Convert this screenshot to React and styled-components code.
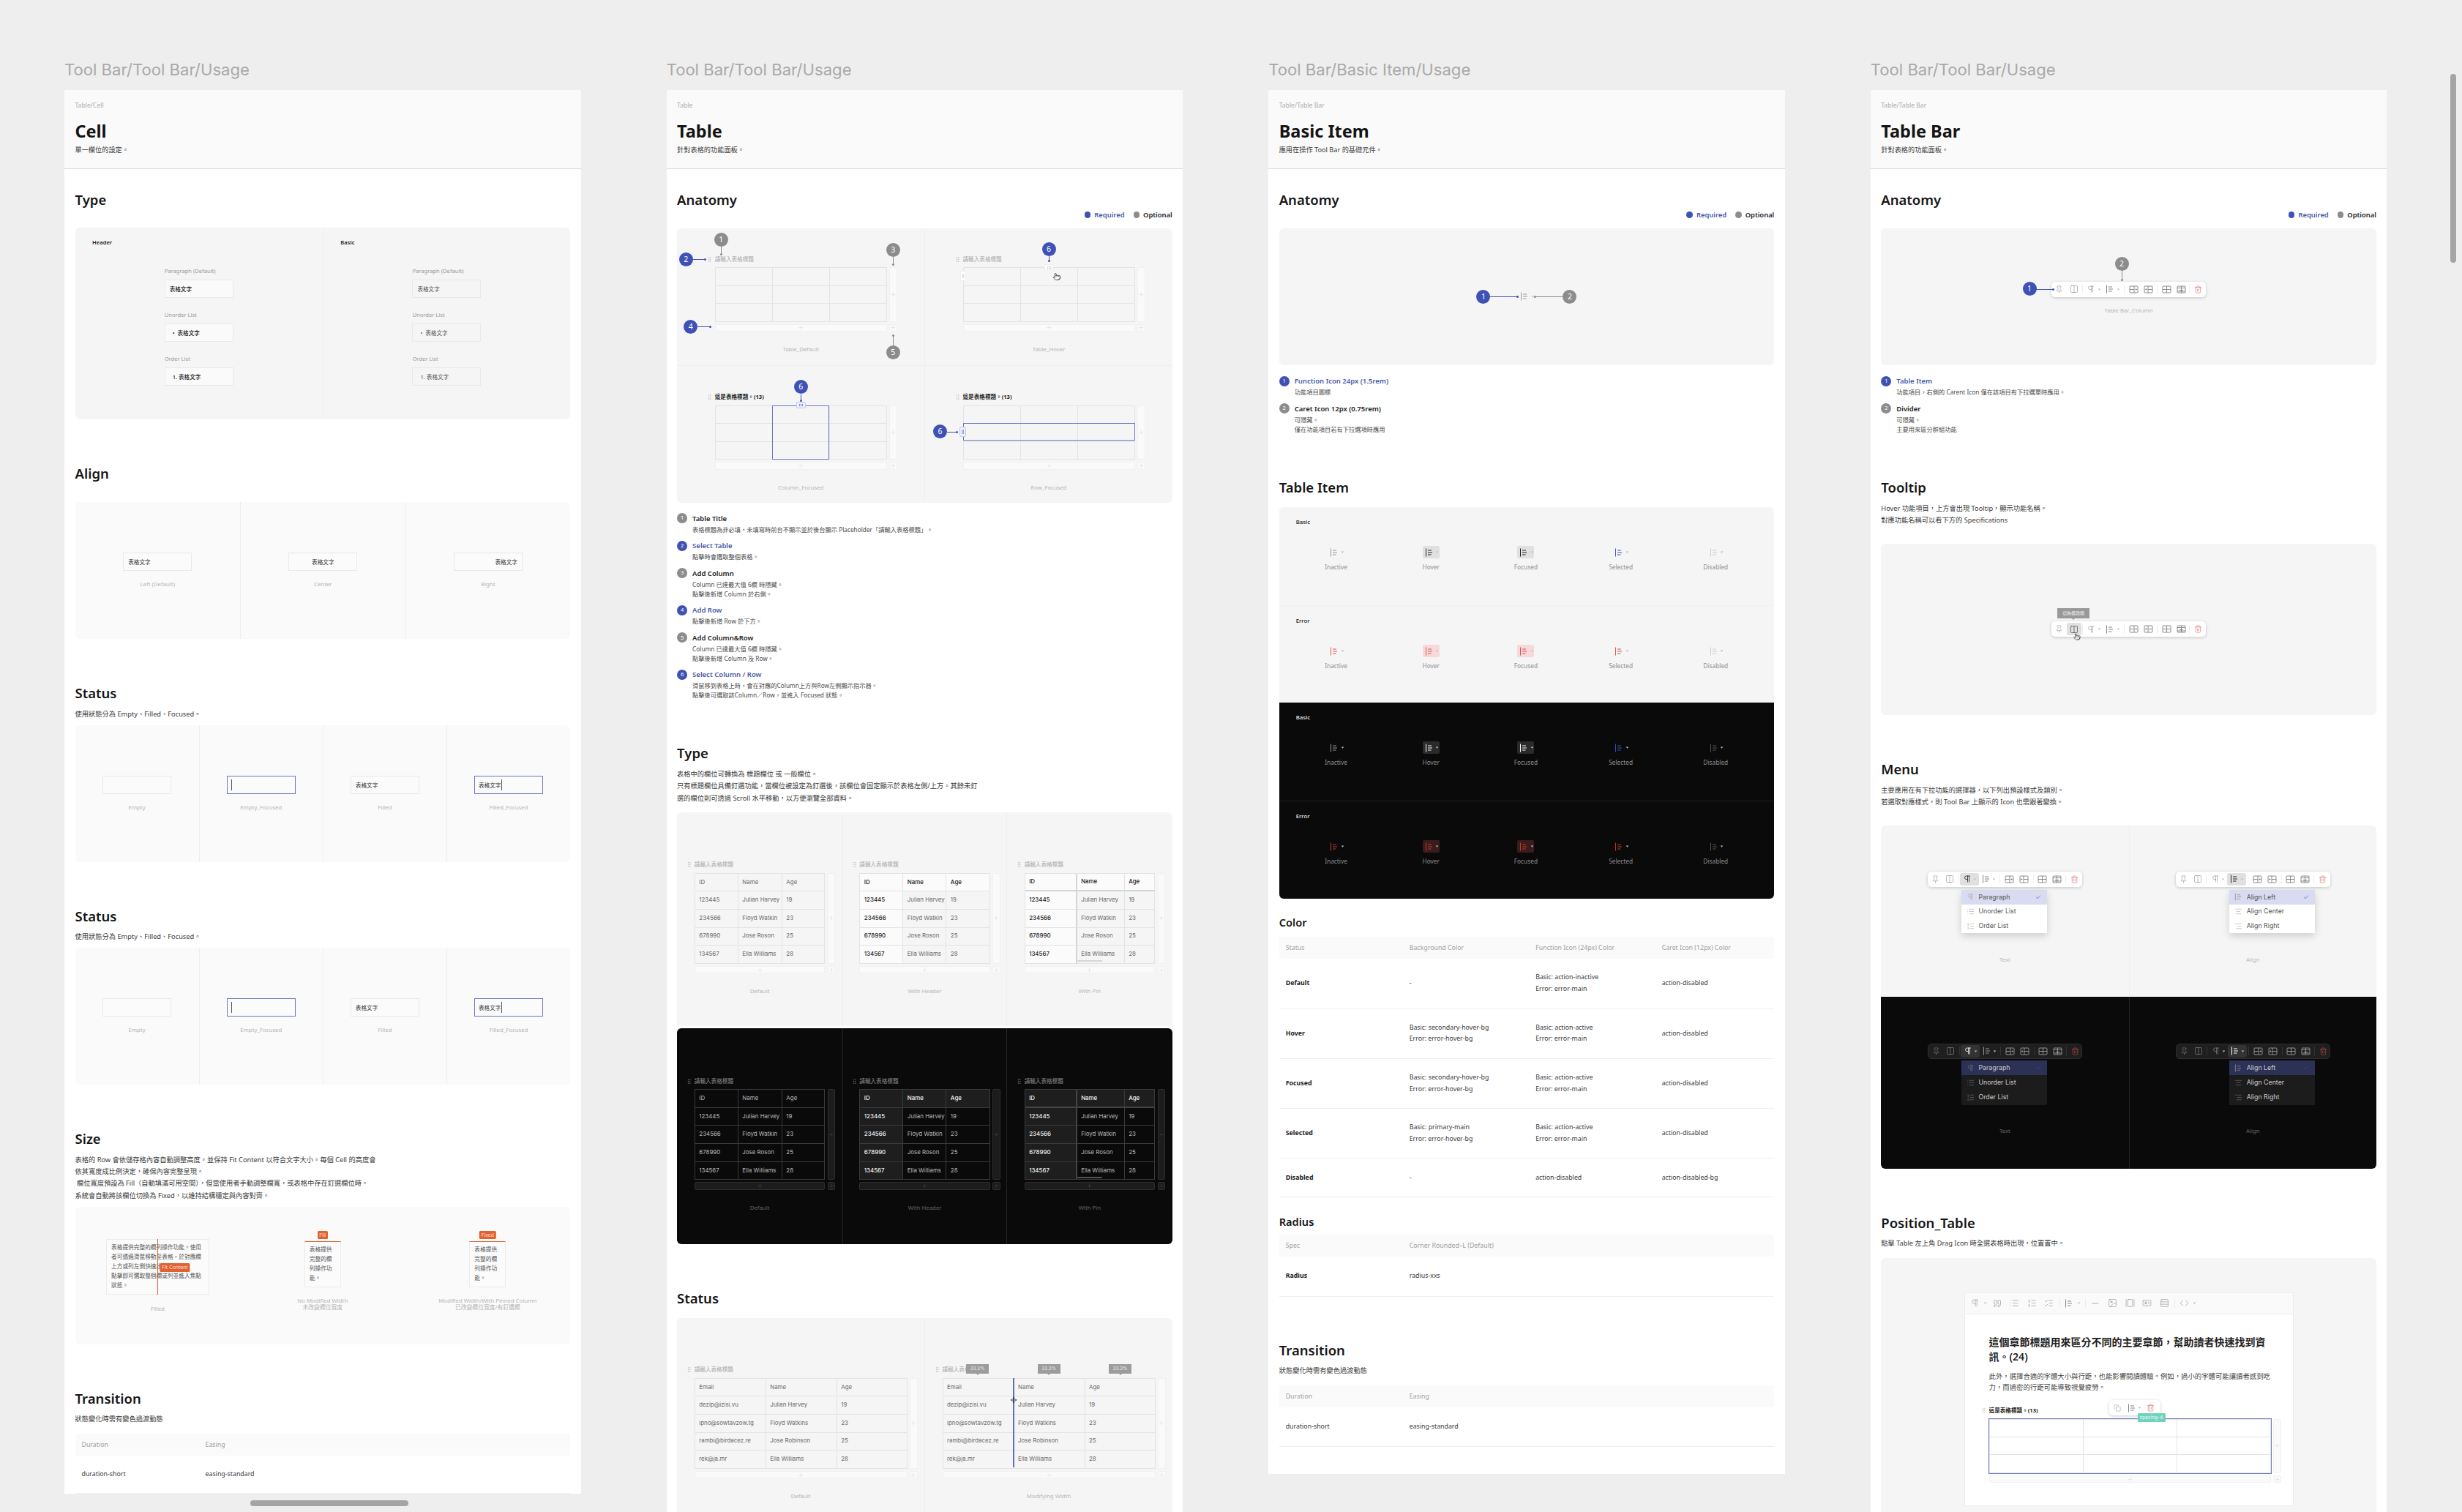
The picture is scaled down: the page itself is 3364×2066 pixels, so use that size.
import React from "react";
import styled, { createGlobalStyle } from "styled-components";
import {
  Pin,
  Columns2,
  Pilcrow,
  Trash2,
  Check,
  List,
  ListOrdered,
  ListChecks,
  AlignCenter,
  AlignRight,
  Plus,
  GripVertical,
  Pointer,
  Move,
  Quote,
  Minus,
  Image,
  GalleryHorizontal,
  IdCard,
  Rows3,
  Code,
  Copy,
} from "lucide-react";

const SANS = `"Noto Sans", "Noto Sans CJK TC", sans-serif`;
const UI = `Inter, "Noto Sans CJK TC", sans-serif`;
const BLUE = "#3f51b5";
const GREY = "#8c8c8c";
const ORANGE = "#e0632b";

const Global = createGlobalStyle`
  html, body {
    margin: 0;
    background: #eeeeee;
    font-family: ${SANS};
  }
  * { box-sizing: border-box; }
`;

const Board = styled.div`
  position: relative;
  display: flex;
  gap: 117px;
  width: 3364px;
  height: 2066px;
  padding-left: 88px;
  overflow: hidden;
  align-items: flex-start;
`;

const Column = styled.div`
  flex: none;
  width: 705.6px;
  padding-top: 80px;
`;

const FrameTitle = styled.div`
  height: 30px;
  margin-bottom: 13px;
  font: 400 22.1px/30px ${UI};
  color: #a9a9a9;
  white-space: nowrap;
`;

const Frame = styled.div`
  background: #fff;
`;

const FrameHead = styled.div`
  height: 108px;
  padding: 15px 14.5px 0;
  background: #fafafa;
  border-bottom: 1px solid #dcdcdc;
`;

const Crumb = styled.div`
  font-size: 8.6px;
  line-height: 12px;
  color: #aaa;
`;

const PageName = styled.h1`
  margin: 13px 0 0;
  font-size: 23.5px;
  line-height: 32px;
  font-weight: 700;
  color: #141414;
`;

const PageNote = styled.div`
  margin-top: 3px;
  font-size: 9.2px;
  line-height: 14px;
  color: #3a3a3a;
`;

const FrameBody = styled.div`
  padding: 0 14.5px ${(p) => p.$pb || 0}px;
`;

const H2 = styled.h2`
  margin: ${(p) => (p.$mt === undefined ? 61 : p.$mt)}px 0 0;
  font-size: 18.5px;
  line-height: 26px;
  font-weight: 600;
  color: #161616;
`;

const H3 = styled.h3`
  margin: ${(p) => p.$mt}px 0 0;
  font-size: 14.6px;
  line-height: 20px;
  font-weight: 600;
  color: #161616;
`;

const Para = styled.p`
  margin: ${(p) => (p.$mt === undefined ? 7.6 : p.$mt)}px 0 0;
  font-size: 9.25px;
  line-height: 16.4px;
  color: #3a3a3a;
  white-space: pre;
`;

const tones = {
  base: { bg: "#f5f5f5", line: "#eeeeee" },
  soft: { bg: "#fafafa", line: "#ededed" },
  dark: { bg: "#0a0a0a", line: "#242424" },
};

const Box = styled.div`
  display: grid;
  grid-template-columns: ${(p) => p.$cols || "1fr"};
  grid-template-rows: ${(p) => p.$rows || "1fr"};
  height: ${(p) => p.$h}px;
  margin-top: ${(p) => (p.$mt === undefined ? 6.5 : p.$mt)}px;
  background: ${(p) => tones[p.$tone || "base"].bg};
  border-radius: ${(p) => p.$radius || "6px"};
  overflow: hidden;
`;

const Pane = styled.div`
  position: relative;
  display: flex;
  flex-direction: column;
  align-items: ${(p) => p.$align || "center"};
  justify-content: ${(p) => p.$justify || "flex-start"};
  padding-top: ${(p) => p.$pt || 0}px;
  border-left: ${(p) => (p.$first ? "0" : `1px solid ${tones[p.$tone || "base"].line}`)};
  border-top: ${(p) => (p.$under ? `1px solid ${tones[p.$tone || "base"].line}` : "0")};
`;

const Caption = styled.div`
  margin-top: ${(p) => p.$mt || 18}px;
  font: 400 7.8px/${(p) => p.$lh || 12}px ${SANS};
  color: ${(p) => (p.$dark ? "#666" : "#b5b5b5")};
  text-align: center;
  white-space: nowrap;
`;

/* legend and numbered list */
const Legend = styled.div`
  display: flex;
  justify-content: flex-end;
  align-items: center;
  gap: 12px;
  height: 14px;
  margin-top: 0.5px;
`;

const LegendItem = styled.span`
  display: inline-flex;
  align-items: center;
  gap: 5px;
  font-size: 9.4px;
  font-weight: 600;
  color: ${(p) => p.$color};
  &::before {
    content: "";
    width: 8.5px;
    height: 8.5px;
    border-radius: 50%;
    background: ${(p) => p.$dot};
  }
`;

const Badge = styled.span`
  display: inline-flex;
  flex: none;
  align-items: center;
  justify-content: center;
  width: ${(p) => p.$size || 19}px;
  height: ${(p) => p.$size || 19}px;
  border-radius: 50%;
  background: ${(p) => p.$color};
  color: #fff;
  font: 400 ${(p) => (p.$size === 14 ? 7.5 : 10.5)}px/1 ${SANS};
`;

const Notes = styled.div`
  display: flex;
  flex-direction: column;
  gap: 8.6px;
  margin-top: 14px;
`;

const NoteHead = styled.div`
  display: flex;
  align-items: center;
  gap: 7px;
  height: 15px;
  font-size: 9.5px;
  font-weight: 600;
  color: ${(p) => (p.$req ? "#4a5aa8" : "#222")};
`;

const NoteText = styled.div`
  margin: 1px 0 0 21px;
  font-size: 8.25px;
  line-height: 13px;
  color: #4a4a4a;
  white-space: pre;
`;

function NoteList({ items }) {
  return (
    <Notes>
      {items.map((n, i) => (
        <div key={n.title}>
          <NoteHead $req={n.req}>
            <Badge $size={14} $color={n.req ? BLUE : GREY}>
              {i + 1}
            </Badge>
            {n.title}
          </NoteHead>
          <NoteText>{n.text}</NoteText>
        </div>
      ))}
    </Notes>
  );
}

const LegendRow = () => (
  <Legend>
    <LegendItem $dot={BLUE} $color="#4a5aa8">Required</LegendItem>
    <LegendItem $dot={GREY} $color="#222">Optional</LegendItem>
  </Legend>
);

/* callouts that lie over a diagram */
const PinBadge = styled(Badge)`
  position: absolute;
  left: ${(p) => p.$x - 9.5}px;
  top: ${(p) => p.$y - 9.5}px;
  z-index: 3;
`;

const Lead = styled.span`
  position: absolute;
  left: ${(p) => p.$x}px;
  top: ${(p) => p.$y}px;
  width: ${(p) => p.$w || 1}px;
  height: ${(p) => p.$h || 1}px;
  background: ${(p) => p.$color};
  z-index: 2;
  &::after {
    content: "";
    position: absolute;
    width: 3px;
    height: 3px;
    border-radius: 50%;
    background: ${(p) => p.$color};
    ${(p) => (p.$w ? "right: -1px; top: -1px;" : p.$dotTop ? "left: -1px; top: -1px;" : "left: -1px; bottom: -1px;")}
  }
`;

const Handle = styled.span`
  position: absolute;
  left: ${(p) => p.$x - p.$w / 2}px;
  top: ${(p) => p.$y - p.$h / 2}px;
  display: flex;
  align-items: center;
  justify-content: center;
  width: ${(p) => p.$w}px;
  height: ${(p) => p.$h}px;
  background: ${(p) => (p.$on ? "#eef0fa" : "#fff")};
  border: 1px solid ${(p) => (p.$on ? "#c5cae9" : "#eee")};
  border-radius: 2px;
  color: ${(p) => (p.$on ? BLUE : "#aaa")};
  z-index: 2;
`;

const SideGrip = styled(GripVertical)`
  transform: rotate(90deg);
`;

const Focus = styled.span`
  position: absolute;
  left: ${(p) => p.$x}px;
  top: ${(p) => p.$y}px;
  width: ${(p) => p.$w}px;
  height: ${(p) => p.$h}px;
  border: 1px solid #6b78c4;
`;

const Cursor = styled.span`
  position: absolute;
  left: ${(p) => p.$x}px;
  top: ${(p) => p.$y}px;
  display: flex;
  transform: translate(-50%, -50%);
  color: #222;
  z-index: 4;
`;

const PercentTip = styled.span`
  position: absolute;
  left: ${(p) => p.$x - 15.5}px;
  top: -1px;
  width: 31px;
  height: 13px;
  background: #9c9c9c;
  color: #eee;
  font: 400 6.6px/13px ${UI};
  text-align: center;
  z-index: 3;
  &::after {
    content: "";
    position: absolute;
    left: 13.5px;
    bottom: -2px;
    border: 2px solid transparent;
    border-bottom: 0;
    border-top-color: #9c9c9c;
  }
`;

const DragLine = styled.span`
  position: absolute;
  left: ${(p) => p.$x}px;
  top: 18px;
  width: 1.5px;
  height: 122px;
  background: #5f6fbb;
  z-index: 2;
`;

/* table frame: grip, title, table, add column and add row */
const Shell = styled.div`
  position: relative;
  display: grid;
  grid-template-columns: 14px ${(p) => p.$w}px 14px;
  margin-left: ${(p) => p.$ml || 0}px;
`;

const GripCell = styled.span`
  display: flex;
  align-items: center;
  justify-content: center;
  height: 13px;
  margin-bottom: 4.5px;
  color: ${(p) => (p.$dark ? "#777" : "#bbb")};
`;

const ShellTitle = styled.div`
  grid-column: 2 / 4;
  height: 13px;
  font-size: 7.6px;
  line-height: 13px;
  font-weight: ${(p) => (p.$bold ? 700 : 400)};
  color: ${(p) => (p.$dark ? "#8a8a8a" : p.$bold ? "#222" : "#aaa")};
  white-space: nowrap;
`;

const AddSide = styled.div`
  display: flex;
  align-items: center;
  justify-content: center;
  margin-left: 3.5px;
  background: ${(p) => (p.$dark ? "#1c1c1c" : "#fafafa")};
  border: 1px solid ${(p) => (p.$dark ? "#2e2e2e" : "#f1f1f1")};
  border-radius: 2px;
  color: ${(p) => (p.$dark ? "#555" : "#c8c8c8")};
`;

const AddBottom = styled(AddSide)`
  height: 10.5px;
  margin: 3px 0 0;
`;

const AddCorner = styled(AddSide)`
  height: 10.5px;
  margin: 3px 0 0 3.5px;
`;

const Spacer = styled.span``;

const TableGrid = styled.div`
  display: grid;
  grid-template-columns: ${(p) => p.$cols};
  grid-auto-rows: ${(p) => p.$row}px;
  border-top: 1px solid ${(p) => (p.$dark ? "#3a3a3a" : "#e3e3e3")};
  border-left: 1px solid ${(p) => (p.$dark ? "#3a3a3a" : "#e3e3e3")};
  background: ${(p) => p.$fill || "transparent"};
  outline: ${(p) => (p.$focus ? "1px solid #6b78c4" : "none")};
`;

const BlankCell = styled.div`
  border-right: 1px solid #e3e3e3;
  border-bottom: 1px solid #e3e3e3;
`;

const DataCell = styled.div`
  display: flex;
  align-items: center;
  padding-left: 5.5px;
  font: ${(p) => (p.$strong ? 500 : 400)} 7.9px/1 ${UI};
  white-space: nowrap;
  overflow: hidden;
  color: ${(p) =>
    p.$dark ? (p.$strong ? "#f0f0f0" : "#b8b8b8") : p.$strong ? "#222" : "#6a6a6a"};
  background: ${(p) =>
    p.$strong ? (p.$dark ? "#1e1e1e" : "#fbfbfb") : "transparent"};
  border-right: ${(p) => (p.$pin ? 2 : 1)}px solid
    ${(p) => (p.$dark ? (p.$pin ? "#444" : "#3a3a3a") : p.$pin ? "#d5d5d5" : "#e3e3e3")};
  border-bottom: ${(p) => (p.$pinRow ? 2 : 1)}px solid
    ${(p) => (p.$dark ? (p.$pinRow ? "#444" : "#3a3a3a") : p.$pinRow ? "#d5d5d5" : "#e3e3e3")};
`;

const ScrollHint = styled.span`
  position: absolute;
  left: ${(p) => p.$x}px;
  top: ${(p) => p.$y}px;
  width: 34px;
  height: 2px;
  border-radius: 1px;
  background: ${(p) => (p.$dark ? "#555" : "#d5d5d5")};
`;

function TableShell({ w, title, bold, dark, ml, children, over }) {
  return (
    <Shell $w={w} $ml={ml}>
      <GripCell $dark={dark}>
        <GripVertical size={9} strokeWidth={1.5} />
      </GripCell>
      <ShellTitle $bold={bold} $dark={dark}>
        {title}
      </ShellTitle>
      <Spacer />
      {children}
      <AddSide $dark={dark}>
        <Plus size={9} strokeWidth={1} />
      </AddSide>
      <Spacer />
      <AddBottom $dark={dark}>
        <Plus size={9} strokeWidth={1} />
      </AddBottom>
      <AddCorner $dark={dark}>
        <Plus size={9} strokeWidth={1} />
      </AddCorner>
      {over}
    </Shell>
  );
}

const TITLE = "請輸入表格標題";
const TITLE_FULL = "這是表格標題。(13)";

function BlankTable({ cols, row, fill, focus }) {
  return (
    <TableGrid $cols={cols} $row={row} $fill={fill} $focus={focus}>
      {Array.from({ length: 9 }, (_, i) => (
        <BlankCell key={i} />
      ))}
    </TableGrid>
  );
}

const AGES = [
  ["ID", "Name", "Age"],
  ["123445", "Julian Harvey", "19"],
  ["234566", "Floyd Watkin", "23"],
  ["678990", "Jose Roson", "25"],
  ["134567", "Ella Williams", "28"],
];

const MAILS = [
  ["Email", "Name", "Age"],
  ["dezip@izisi.vu", "Julian Harvey", "19"],
  ["ipno@sowtavzow.tg", "Floyd Watkins", "23"],
  ["rambi@birdacez.re", "Jose Robinson", "25"],
  ["rek@ja.mr", "Ella Williams", "28"],
];

function DataTable({ rows, cols, dark, variant }) {
  return (
    <TableGrid $cols={cols} $row={24.6} $dark={dark}>
      {rows.flatMap((r, ri) =>
        r.map((v, ci) => (
          <DataCell
            key={`${ri}-${ci}`}
            $dark={dark}
            $strong={variant && (ri === 0 || ci === 0)}
            $pin={variant === "pin" && ci === 0}
            $pinRow={variant === "pin" && ri === 0}
          >
            {v}
          </DataCell>
        ))
      )}
    </TableGrid>
  );
}

function TypeRow({ dark }) {
  const list = [
    { cap: "Default", cols: "59px 60px 1fr" },
    { cap: "With Header", cols: "59px 59px 1fr", variant: "header" },
    { cap: "With Pin", cols: "71px 65px 1fr", variant: "pin" },
  ];
  return list.map((t, i) => (
    <Pane key={t.cap} $first={i === 0} $tone={dark ? "dark" : "base"} $pt={dark ? 66 : 65}>
      <TableShell
        w={178.5}
        title={TITLE}
        dark={dark}
        over={t.variant === "pin" ? <ScrollHint $x={86} $y={137} $dark={dark} /> : null}
      >
        <DataTable rows={AGES} cols={t.cols} dark={dark} variant={t.variant} />
      </TableShell>
      <Caption $dark={dark}>{t.cap}</Caption>
    </Pane>
  ));
}

/* anatomy of the table */
const anatomyCols = "78px 78px 1fr";

function AnatomyTable() {
  const line = (c) => ({ $color: c });
  return (
    <Box $cols="1fr 1fr" $rows="1fr 1fr" $h={375} $mt={11}>
      <Pane $first $pt={36}>
        <TableShell
          w={235}
          title={TITLE}
          over={
            <>
              <PinBadge $x={22.5} $y={-20.5} $color={GREY}>1</PinBadge>
              <Lead $x={22.5} $y={-11} $h={11} {...line(GREY)} />
              <PinBadge $x={-25.5} $y={6.5} $color={BLUE}>2</PinBadge>
              <Lead $x={-16.5} $y={6.5} $w={18} {...line(BLUE)} />
              <PinBadge $x={257.5} $y={-6.5} $color={GREY}>3</PinBadge>
              <Lead $x={257.5} $y={3} $h={11} {...line(GREY)} />
              <PinBadge $x={-19} $y={98.5} $color={BLUE}>4</PinBadge>
              <Lead $x={-9.5} $y={98.5} $w={18} {...line(BLUE)} />
              <PinBadge $x={257.5} $y={133.5} $color={GREY}>5</PinBadge>
              <Lead $x={257.5} $y={110.5} $h={14} $dotTop {...line(GREY)} />
            </>
          }
        >
          <BlankTable cols={anatomyCols} row={24.5} />
        </TableShell>
        <Caption>Table_Default</Caption>
      </Pane>
      <Pane $pt={36}>
        <TableShell
          w={235}
          title={TITLE}
          over={
            <>
              <PinBadge $x={131.5} $y={-7.5} $color={BLUE}>6</PinBadge>
              <Lead $x={131.5} $y={2.5} $h={7} {...line(BLUE)} />
              <Handle $x={131.5} $y={17.5} $w={12} $h={8}>
                <SideGrip size={7} strokeWidth={1.5} />
              </Handle>
              <Handle $x={14} $y={29.5} $w={8} $h={14}>
                <GripVertical size={8} strokeWidth={1.5} />
              </Handle>
              <Cursor $x={142.5} $y={30}>
                <Pointer size={11} strokeWidth={1.5} />
              </Cursor>
            </>
          }
        >
          <BlankTable cols={anatomyCols} row={24.5} />
        </TableShell>
        <Caption>Table_Hover</Caption>
      </Pane>
      <Pane $first $under $pt={36}>
        <TableShell
          w={235}
          title={TITLE_FULL}
          bold
          over={
            <>
              <PinBadge $x={131.5} $y={-7.5} $color={BLUE}>6</PinBadge>
              <Lead $x={131.5} $y={2.5} $h={9} {...line(BLUE)} />
              <Focus $x={92.5} $y={17.5} $w={78} $h={74} />
              <Handle $x={131.5} $y={17.5} $w={13} $h={9} $on>
                <SideGrip size={7} strokeWidth={1.5} />
              </Handle>
            </>
          }
        >
          <BlankTable cols={anatomyCols} row={24.5} />
        </TableShell>
        <Caption>Column_Focused</Caption>
      </Pane>
      <Pane $under $pt={36}>
        <TableShell
          w={235}
          title={TITLE_FULL}
          bold
          over={
            <>
              <PinBadge $x={-17} $y={53.5} $color={BLUE}>6</PinBadge>
              <Lead $x={-8} $y={53.5} $w={14} {...line(BLUE)} />
              <Focus $x={14} $y={42} $w={235} $h={24} />
              <Handle $x={14} $y={53.5} $w={9} $h={14} $on>
                <GripVertical size={8} strokeWidth={1.5} />
              </Handle>
            </>
          }
        >
          <BlankTable cols={anatomyCols} row={24.5} />
        </TableShell>
        <Caption>Row_Focused</Caption>
      </Pane>
    </Box>
  );
}

/* cells */
const CellLabel = styled.div`
  margin-top: ${(p) => p.$mt || 0}px;
  margin-bottom: 6px;
  font-size: 7.6px;
  line-height: 12px;
  color: #999;
  width: 94px;
`;

const Corner = styled.div`
  align-self: flex-start;
  margin: 14px 0 27px 23.5px;
  font-size: 7.6px;
  line-height: 12px;
  font-weight: 600;
  color: #222;
`;

const Cell = styled.div`
  display: flex;
  align-items: center;
  justify-content: ${(p) => p.$justify || "flex-start"};
  width: 94px;
  height: 25px;
  padding: 0 ${(p) => (p.$focus ? 5 : 6)}px 0 ${(p) => (p.$focus ? 5 : 6) + (p.$indent || 0)}px;
  background: ${(p) => p.$bg || "#fbfbfb"};
  border: ${(p) => (p.$focus ? "1px solid #6b78c4" : "1px solid #e9e9e9")};
  font-size: 7.6px;
  font-weight: ${(p) => p.$weight || 400};
  color: ${(p) => p.$color || "#333"};
  white-space: pre;
`;

const Caret = styled.span`
  width: 1px;
  height: 15px;
  margin-left: ${(p) => p.$ml || 0}px;
  background: #555;
`;

const Stack = styled.div`
  display: flex;
  flex-direction: column;
  align-items: center;
`;

function TypeColumn({ name, first, bg, color, weight }) {
  const rows = [
    { label: "Paragraph (Default)", text: "表格文字", indent: 0 },
    { label: "Unorder List", text: "•  表格文字", indent: 4 },
    { label: "Order List", text: "1. 表格文字", indent: 4 },
  ];
  return (
    <Pane $first={first}>
      <Corner>{name}</Corner>
      {rows.map((r, i) => (
        <Stack key={r.label}>
          <CellLabel $mt={i ? 17 : 0}>{r.label}</CellLabel>
          <Cell $bg={bg} $color={color} $weight={weight} $indent={r.indent}>
            {r.text}
          </Cell>
        </Stack>
      ))}
    </Pane>
  );
}

function StatusBox({ mt }) {
  const list = [
    { cap: "Empty" },
    { cap: "Empty_Focused", focus: true, caret: true },
    { cap: "Filled", text: "表格文字" },
    { cap: "Filled_Focused", text: "表格文字", focus: true, caret: true },
  ];
  return (
    <Box $cols="repeat(4, 1fr)" $h={187} $tone="soft" $mt={mt}>
      {list.map((s, i) => (
        <Pane key={s.cap} $first={i === 0} $tone="soft" $justify="center">
          <Cell $focus={s.focus}>
            {s.text}
            {s.caret && <Caret $ml={s.text ? 1 : 0} />}
          </Cell>
          <Caption $mt={12}>{s.cap}</Caption>
        </Pane>
      ))}
    </Box>
  );
}

/* size demo */
const SizeCell = styled.div`
  position: relative;
  width: ${(p) => p.$w}px;
  padding: ${(p) => p.$pad};
  background: #fbfbfb;
  border: 1px solid #ececec;
  border-top: ${(p) => (p.$marked ? `1px solid ${ORANGE}` : "1px solid #ececec")};
  font-size: 7.7px;
  line-height: ${(p) => p.$lh}px;
  color: #555;
`;

const SizeMark = styled.span`
  position: absolute;
  left: 50%;
  top: -1px;
  bottom: -1px;
  width: 1px;
  background: ${ORANGE};
`;

const OrangeTag = styled.span`
  position: absolute;
  left: ${(p) => p.$left || "50%"};
  top: ${(p) => p.$top}px;
  transform: translateX(-50%);
  padding: 0 ${(p) => p.$px || 2.5}px;
  height: ${(p) => p.$h || 11}px;
  border-radius: 1.5px;
  background: ${ORANGE};
  color: #fde;
  font: 400 6.8px/${(p) => p.$h || 11}px ${UI};
  white-space: nowrap;
`;

/* spec tables */
const SpecHead = styled.div`
  display: grid;
  grid-template-columns: ${(p) => p.$cols};
  align-items: center;
  height: ${(p) => p.$h || 30}px;
  margin-top: ${(p) => p.$mt}px;
  padding-left: 9px;
  background: #fafafa;
  border-radius: 3px;
  font-size: 8.8px;
  color: #a0a0a0;
  white-space: nowrap;
`;

const SpecRow = styled.div`
  display: grid;
  grid-template-columns: ${(p) => p.$cols};
  align-items: center;
  height: ${(p) => p.$h}px;
  padding-left: 9px;
  border-bottom: 1px solid #efefef;
  font-size: 8.8px;
  line-height: 15.3px;
  color: #3a3a3a;
  white-space: pre;
`;

const SpecName = styled.span`
  font-weight: ${(p) => (p.$bold ? 700 : 400)};
  color: ${(p) => (p.$bold ? "#222" : "#3a3a3a")};
`;

const COLOR_COLS = "169px 172.5px 172.5px 1fr";
const PAIR_COLS = "169px 1fr";

const COLOR_ROWS = [
  { h: 69, cells: ["Default", "-", "Basic: action-inactive\nError: error-main", "action-disabled"] },
  { h: 68.6, cells: ["Hover", "Basic: secondary-hover-bg\nError: error-hover-bg", "Basic: action-active\nError: error-main", "action-disabled"] },
  { h: 68, cells: ["Focused", "Basic: secondary-hover-bg\nError: error-hover-bg", "Basic: action-active\nError: error-main", "action-disabled"] },
  { h: 68, cells: ["Selected", "Basic: primary-main\nError: error-hover-bg", "Basic: action-active\nError: error-main", "action-disabled"] },
  { h: 53, cells: ["Disabled", "-", "action-disabled", "action-disabled-bg"] },
];

/* icons */
const AlignGlyph = ({ size = 12 }) => (
  <svg width={size} height={size} viewBox="0 0 12 12" fill="none" stroke="currentColor" strokeWidth="1">
    <path d="M1.5 .5v11M4 3h5M4 6h6M4 9h4.5" />
  </svg>
);

const CaretGlyph = () => (
  <svg width="5" height="5" viewBox="0 0 6 6" fill="currentColor">
    <path d="M.8 1.8h4.4L3 4.6z" />
  </svg>
);

const GridGlyph = ({ d }) => (
  <svg width="13" height="13" viewBox="0 0 13 13" fill="none" stroke="currentColor" strokeWidth="0.9">
    <rect x="1" y="2" width="11" height="9" rx="1" />
    <path d={d} />
  </svg>
);

const GRID_A = "M1 6.5h6M7 2v9M8.5 6.5h2.4M9.7 5.3v2.4";
const GRID_B = "M12 6.5H6M6 2v9M4.5 6.5H2.1M3.3 5.3v2.4";
const GRID_C = "M1 6.5h11M6.5 2v9";
const GRID_D = "M1 4.5h11M6.5 2v9M4 7.5h5M1 9h11";

/* table bar */
const Bar = styled.div`
  position: relative;
  display: flex;
  align-items: center;
  width: 211px;
  height: 21px;
  padding-left: 0.5px;
  background: ${(p) => (p.$dark ? "#1f1f1f" : "#fff")};
  border-radius: 5px;
  border: ${(p) => (p.$dark ? "1px solid #2e2e2e" : "0")};
  box-shadow: ${(p) => (p.$dark ? "none" : "0 1px 4px rgba(0, 0, 0, 0.2)")};
`;

const Tool = styled.span`
  display: flex;
  flex: none;
  align-items: center;
  justify-content: ${(p) => (p.$caret ? "flex-start" : "center")};
  gap: 2.5px;
  width: ${(p) => (p.$caret ? 26 : 20)}px;
  height: 17px;
  padding-left: ${(p) => (p.$caret ? 4 : 0)}px;
  border-radius: 3px;
  background: ${(p) => (p.$on ? (p.$dark ? "#333" : "#e0e0e0") : "transparent")};
  color: ${(p) =>
    p.$danger
      ? "#d9534f"
      : p.$on
      ? p.$dark
        ? "#fff"
        : "#222"
      : p.$dark
      ? "#9a9a9a"
      : "#808080"};
`;

const ToolCaret = styled.span`
  display: flex;
  color: #bdbdbd;
`;

const ToolGap = styled.span`
  flex: none;
  width: ${(p) => p.$w}px;
  display: flex;
  justify-content: center;
  &::after {
    content: "";
    width: 1px;
    height: 12px;
    background: ${(p) => (p.$dark ? "#333" : "#eee")};
  }
`;

function TableBar({ dark, on, children }) {
  return (
    <Bar $dark={dark}>
      <Tool $dark={dark}><Pin size={11} strokeWidth={1.1} /></Tool>
      <Tool $dark={dark} $on={on === "panel"}><Columns2 size={12} strokeWidth={1.1} /></Tool>
      <ToolGap $w={3.5} $dark={dark} />
      <Tool $dark={dark} $caret $on={on === "text"}>
        <Pilcrow size={12} strokeWidth={on === "text" ? 1.6 : 1.1} />
        <ToolCaret><CaretGlyph /></ToolCaret>
      </Tool>
      <Tool $dark={dark} $caret $on={on === "align"}>
        <AlignGlyph />
        <ToolCaret><CaretGlyph /></ToolCaret>
      </Tool>
      <ToolGap $w={6} $dark={dark} />
      <Tool $dark={dark}><GridGlyph d={GRID_A} /></Tool>
      <Tool $dark={dark}><GridGlyph d={GRID_B} /></Tool>
      <ToolGap $w={5} $dark={dark} />
      <Tool $dark={dark}><GridGlyph d={GRID_C} /></Tool>
      <Tool $dark={dark}><GridGlyph d={GRID_D} /></Tool>
      <ToolGap $w={3.5} $dark={dark} />
      <Tool $danger><Trash2 size={11} strokeWidth={1.2} /></Tool>
      {children}
    </Bar>
  );
}

const NameTip = styled.span`
  position: absolute;
  left: 8px;
  top: -18.5px;
  width: 44px;
  height: 14px;
  background: #999;
  color: #eee;
  font-size: 6px;
  line-height: 14px;
  text-align: center;
  &::after {
    content: "";
    position: absolute;
    left: 20px;
    bottom: -2px;
    border: 2px solid transparent;
    border-bottom: 0;
    border-top-color: #999;
  }
`;

/* drop menus */
const MenuBox = styled.div`
  align-self: flex-start;
  width: 117px;
  margin: ${(p) => (p.$dark ? 2.5 : 4.5)}px 0 0 ${(p) => p.$ml}px;
  background: ${(p) => (p.$dark ? "#1c1c1c" : "#fff")};
  box-shadow: ${(p) => (p.$dark ? "none" : "0 4px 10px rgba(0, 0, 0, 0.16)")};
`;

const MenuRow = styled.div`
  display: flex;
  align-items: center;
  height: ${(p) => (p.$dark ? 20.2 : 19.6)}px;
  padding: 0 8px 0 7px;
  gap: 5.5px;
  background: ${(p) => (p.$on ? (p.$dark ? "#2c3156" : "#d9dbf0") : "transparent")};
  font: 400 8.8px/1 ${UI};
  color: ${(p) => (p.$dark ? "#ccc" : "#555")};
`;

const MenuIcon = styled.span`
  display: flex;
  color: ${(p) => (p.$dark ? "#888" : "#999")};
`;

const MenuCheck = styled.span`
  display: flex;
  margin-left: auto;
  color: ${BLUE};
`;

function DropMenu({ dark, ml, items }) {
  return (
    <MenuBox $dark={dark} $ml={ml}>
      {items.map(([label, Icon], i) => (
        <MenuRow key={label} $dark={dark} $on={i === 0}>
          <MenuIcon $dark={dark}><Icon size={11} strokeWidth={1.1} /></MenuIcon>
          {label}
          {i === 0 && <MenuCheck><Check size={8} strokeWidth={2} /></MenuCheck>}
        </MenuRow>
      ))}
    </MenuBox>
  );
}

const TEXT_ITEMS = [["Paragraph", Pilcrow], ["Unorder List", List], ["Order List", ListOrdered]];
const ALIGN_ITEMS = [["Align Left", AlignGlyph], ["Align Center", AlignCenter], ["Align Right", AlignRight]];

function MenuRowPanes({ dark }) {
  const tone = dark ? "dark" : "base";
  return (
    <>
      <Pane $first $tone={tone} $pt={dark ? 64 : 62.5}>
        <Stack>
          <TableBar dark={dark} on="text" />
          <DropMenu dark={dark} ml={46} items={TEXT_ITEMS} />
          <Caption $mt={dark ? 29.5 : 30} $dark={dark}>Text</Caption>
        </Stack>
      </Pane>
      <Pane $tone={tone} $pt={dark ? 64 : 62.5}>
        <Stack>
          <TableBar dark={dark} on="align" />
          <DropMenu dark={dark} ml={73.5} items={ALIGN_ITEMS} />
          <Caption $mt={dark ? 29.5 : 30} $dark={dark}>Align</Caption>
        </Stack>
      </Pane>
    </>
  );
}

/* basic item */
const FlowLine = styled.span`
  position: relative;
  width: 38px;
  height: 1px;
  background: ${(p) => p.$color};
  &::after {
    content: "";
    position: absolute;
    top: -1px;
    ${(p) => (p.$end ? "right: -1px;" : "left: -1px;")}
    width: 3px;
    height: 3px;
    border-radius: 50%;
    background: ${(p) => p.$color};
  }
`;

const FlowRow = styled.div`
  display: flex;
  align-items: center;
`;

const Item = styled.span`
  display: flex;
  align-items: center;
  gap: 2.5px;
  width: 23px;
  height: 17px;
  padding-left: 3px;
  border-radius: 2px;
  background: ${(p) => p.$bg || "transparent"};
  color: ${(p) => p.$color};
`;

const ItemPanel = styled.div`
  background: ${(p) => (p.$dark ? "#0a0a0a" : "#f5f5f5")};
`;

const ItemSet = styled.div`
  height: 134px;
  padding: 14px 0 0 13px;
  border-top: ${(p) => (p.$under ? `1px solid ${p.$dark ? "#1c1c1c" : "#f0f0f0"}` : "0")};
`;

const ItemName = styled.div`
  margin: 0 0 27px 10px;
  font-size: 7.8px;
  line-height: 12px;
  font-weight: 500;
  color: ${(p) => (p.$dark ? "#eee" : "#222")};
`;

const ItemGrid = styled.div`
  display: grid;
  grid-template-columns: repeat(5, 129.7px);
`;

const ItemCol = styled.div`
  display: flex;
  flex-direction: column;
  align-items: center;
  gap: 6px;
`;

const ItemLabel = styled.div`
  font-size: 8.3px;
  line-height: 12px;
  color: #8e8e8e;
`;

const STATES = ["Inactive", "Hover", "Focused", "Selected", "Disabled"];

function itemLook(state, dark, error) {
  const hot = state === "Hover" || state === "Focused";
  const hit = error ? (dark ? "#c0392b" : "#d9534f") : dark ? "#fff" : "#222";
  if (state === "Disabled") return { color: dark ? "#555" : "#ccc" };
  if (state === "Selected") return { color: error ? hit : BLUE };
  if (hot)
    return {
      color: hit,
      bg: error ? (dark ? "#3a1c1c" : "#f8d9d9") : dark ? "#2a2a2a" : "#e0e0e0",
    };
  return { color: error ? hit : "#999" };
}

function ItemSets({ dark }) {
  return ["Basic", "Error"].map((name, i) => (
    <ItemSet key={name} $under={i === 1} $dark={dark}>
      <ItemName $dark={dark}>{name}</ItemName>
      <ItemGrid>
        {STATES.map((s) => {
          const look = itemLook(s, dark, name === "Error");
          return (
            <ItemCol key={s}>
              <Item $color={look.color} $bg={look.bg}>
                <AlignGlyph />
                <ToolCaret><CaretGlyph /></ToolCaret>
              </Item>
              <ItemLabel>{s}</ItemLabel>
            </ItemCol>
          );
        })}
      </ItemGrid>
    </ItemSet>
  ));
}

/* editor */
const Editor = styled.div`
  width: 450px;
  height: 292px;
  background: #fff;
  border: 1px solid #ececec;
`;

const EditorBar = styled.div`
  display: flex;
  align-items: center;
  height: 29px;
  padding-left: 3px;
  background: #fafafa;
  border-bottom: 1px solid #ececec;
  color: #888;
`;

const EditorTool = styled.span`
  display: flex;
  flex: none;
  align-items: center;
  justify-content: ${(p) => (p.$caret ? "flex-start" : "center")};
  gap: 5px;
  width: ${(p) => (p.$caret ? 30 : 23.5)}px;
  padding-left: ${(p) => (p.$caret ? 4 : 0)}px;
`;

const EditorGap = styled.span`
  flex: none;
  width: 5px;
  display: flex;
  justify-content: center;
  &::after {
    content: "";
    width: 1px;
    height: 13px;
    background: #ececec;
  }
`;

const EditorBody = styled.div`
  padding: 28px 33px 0;
`;

const EditorTitle = styled.div`
  font-size: 14px;
  line-height: 20px;
  font-weight: 600;
  color: #222;
  white-space: pre;
`;

const EditorText = styled.div`
  margin: 9.5px 0 18px;
  font-size: 9.4px;
  line-height: 15px;
  color: #444;
  white-space: pre;
`;

const MiniBar = styled.div`
  position: absolute;
  left: 178px;
  top: -8px;
  display: flex;
  align-items: center;
  width: 70.5px;
  height: 20.5px;
  padding-left: 1px;
  background: #fff;
  border-radius: 5px;
  box-shadow: 0 1px 4px rgba(0, 0, 0, 0.2);
  z-index: 2;
`;

const SpaceTag = styled.span`
  position: absolute;
  left: 217px;
  top: 9.5px;
  width: 38px;
  height: 12px;
  background: #70d2bb;
  border-radius: 1.5px;
  color: #e6fff8;
  font: 400 6.5px/12px ${UI};
  text-align: center;
  z-index: 3;
`;

/* overlay scrollbars of the canvas */
const ScrollThumb = styled.div`
  position: absolute;
  left: ${(p) => p.$x}px;
  top: ${(p) => p.$y}px;
  width: ${(p) => p.$w}px;
  height: ${(p) => p.$h}px;
  border-radius: 4px;
  background: #a4a4a4;
`;

export default function App() {
  return (
    <>
      <Global />
      <Board>
        <Column>
          <FrameTitle>Tool Bar/Tool Bar/Usage</FrameTitle>
          <Frame>
            <FrameHead>
              <Crumb>Table/Cell</Crumb>
              <PageName>Cell</PageName>
              <PageNote>單一欄位的設定。</PageNote>
            </FrameHead>
            <FrameBody>
              <H2 $mt={29}>Type</H2>
              <Box $cols="1fr 1fr" $h={262} $mt={25}>
                <TypeColumn first name="Header" bg="#fafafa" color="#222" weight={500} />
                <TypeColumn name="Basic" bg="#f5f5f5" color="#555" />
              </Box>

              <H2>Align</H2>
              <Box $cols="repeat(3, 1fr)" $h={187} $tone="soft" $mt={26}>
                {[
                  ["Left (Default)", "flex-start"],
                  ["Center", "center"],
                  ["Right", "flex-end"],
                ].map(([cap, j], i) => (
                  <Pane key={cap} $first={i === 0} $tone="soft" $justify="center">
                    <Cell $justify={j}>表格文字</Cell>
                    <Caption $mt={12}>{cap}</Caption>
                  </Pane>
                ))}
              </Box>

              <H2>Status</H2>
              <Para>使用狀態分為 Empty、Filled、Focused。</Para>
              <StatusBox />

              <H2>Status</H2>
              <Para>使用狀態分為 Empty、Filled、Focused。</Para>
              <StatusBox />

              <H2>Size</H2>
              <Para>
                {"表格的 Row 會依儲存格內容自動調整高度，並保持 Fit Content 以符合文字大小。每個 Cell 的高度會\n依其寬度成比例決定，確保內容完整呈現。\n 欄位寬度預設為 Fill（自動填滿可用空間），但當使用者手動調整欄寬，或表格中存在釘選欄位時，\n系統會自動將該欄位切換為 Fixed，以維持結構穩定與內容對齊。"}
              </Para>
              <Box $cols="repeat(3, 1fr)" $h={188} $tone="soft">
                <Pane $first $tone="soft" $pt={44}>
                  <SizeCell $w={140.5} $pad="4.5px 6px" $lh={13}>
                    表格提供完整的欄列操作功能。使用
                    <br />
                    者可透過滑鼠移動至表格，於對應欄
                    <br />
                    上方或列左側快速出現指示器。
                    <br />
                    點擊即可選取整個欄或列並進入焦點
                    <br />
                    狀態。
                    <SizeMark />
                    <OrangeTag $left="67%" $top={32} $h={12} $px={3}>Fit Content</OrangeTag>
                  </SizeCell>
                  <Caption $mt={13}>Filled</Caption>
                </Pane>
                {[
                  ["Fill", "No Modified Width", "未改變欄位寬度"],
                  ["Fixed", "Modified Width/With Pinned Column", "已改變欄位寬度/有釘選欄"],
                ].map(([tag, a, b]) => (
                  <Pane key={tag} $first $tone="soft" $pt={47}>
                    <SizeCell $w={50} $pad="4px 6px" $lh={13.2} $marked>
                      表格提供完整的欄列操作功能。
                      <OrangeTag $top={-14.5}>{tag}</OrangeTag>
                    </SizeCell>
                    <Caption $mt={14} $lh={9.5}>
                      {a}
                      <br />
                      {b}
                    </Caption>
                  </Pane>
                ))}
              </Box>

              <H2>Transition</H2>
              <Para>狀態變化時需有變色過渡動態</Para>
              <SpecHead $cols={PAIR_COLS} $h={30.5} $mt={11}>
                <span>Duration</span>
                <span>Easing</span>
              </SpecHead>
              <SpecRow $cols={PAIR_COLS} $h={52}>
                <SpecName>duration-short</SpecName>
                <span>easing-standard</span>
              </SpecRow>
            </FrameBody>
          </Frame>
        </Column>

        <Column>
          <FrameTitle>Tool Bar/Tool Bar/Usage</FrameTitle>
          <Frame>
            <FrameHead>
              <Crumb>Table</Crumb>
              <PageName>Table</PageName>
              <PageNote>針對表格的功能面板。</PageNote>
            </FrameHead>
            <FrameBody>
              <H2 $mt={29}>Anatomy</H2>
              <LegendRow />
              <AnatomyTable />
              <NoteList
                items={[
                  { title: "Table Title", text: "表格標題為非必填，未填寫時前台不顯示並於後台顯示 Placeholder「請輸入表格標題」。" },
                  { title: "Select Table", req: true, text: "點擊時會選取整個表格。" },
                  { title: "Add Column", text: "Column 已達最大值 6欄 時隱藏。\n點擊後新增 Column 於右側。" },
                  { title: "Add Row", req: true, text: "點擊後新增 Row 於下方。" },
                  { title: "Add Column&Row", text: "Column 已達最大值 6欄 時隱藏。\n點擊後新增 Column 及 Row。" },
                  { title: "Select Column / Row", req: true, text: "滑鼠移到表格上時，會在對應的Column上方與Row左側顯示指示器。\n點擊後可選取該Column／Row，並進入 Focused 狀態。" },
                ]}
              />
              <H2 $mt={60}>Type</H2>
              <Para>
                {"表格中的欄位可轉換為 標題欄位 或 一般欄位。\n只有標題欄位具備釘選功能，當欄位被設定為釘選後，該欄位會固定顯示於表格左側/上方。其餘未釘\n選的欄位則可透過 Scroll 水平移動，以方便瀏覽全部資料。"}
              </Para>
              <Box $cols="226px 224px 1fr" $h={292} $mt={11}>
                <TypeRow />
              </Box>
              <Box $cols="226px 224px 1fr" $h={295} $mt={2.5} $tone="dark">
                <TypeRow dark />
              </Box>

              <H2 $mt={61}>Status</H2>
              <Box $cols="1fr 1fr" $h={300} $mt={14}>
                <Pane $first $pt={64.5}>
                  <TableShell w={291} title={TITLE}>
                    <DataTable rows={MAILS} cols="97px 97px 1fr" />
                  </TableShell>
                  <Caption>Default</Caption>
                </Pane>
                <Pane $pt={64.5}>
                  <TableShell
                    w={291}
                    title={TITLE}
                    over={
                      <>
                        <PercentTip $x={62}>33.3%</PercentTip>
                        <PercentTip $x={159.5}>33.3%</PercentTip>
                        <PercentTip $x={257}>33.3%</PercentTip>
                        <DragLine $x={110.5} />
                        <Cursor $x={111} $y={48}>
                          <Move size={9} strokeWidth={2} />
                        </Cursor>
                      </>
                    }
                  >
                    <DataTable rows={MAILS} cols="97px 97px 1fr" />
                  </TableShell>
                  <Caption>Modifying Width</Caption>
                </Pane>
              </Box>
            </FrameBody>
          </Frame>
        </Column>

        <Column>
          <FrameTitle>Tool Bar/Basic Item/Usage</FrameTitle>
          <Frame>
            <FrameHead>
              <Crumb>Table/Table Bar</Crumb>
              <PageName>Basic Item</PageName>
              <PageNote>應用在操作 Tool Bar 的基礎元件。</PageNote>
            </FrameHead>
            <FrameBody $pb={37}>
              <H2 $mt={29}>Anatomy</H2>
              <LegendRow />
              <Box $h={187.5} $mt={11}>
                <Pane $first $justify="center">
                  <FlowRow>
                    <Badge $color={BLUE}>1</Badge>
                    <FlowLine $color={BLUE} $end />
                    <Item $color="#999">
                      <AlignGlyph />
                      <ToolCaret><CaretGlyph /></ToolCaret>
                    </Item>
                    <FlowLine $color={GREY} />
                    <Badge $color={GREY}>2</Badge>
                  </FlowRow>
                </Pane>
              </Box>
              <NoteList
                items={[
                  { title: "Function Icon 24px (1.5rem)", req: true, text: "功能項目圖標" },
                  { title: "Caret Icon 12px (0.75rem)", text: "可隱藏。\n僅在功能項目若有下拉選項時應用" },
                ]}
              />
              <H2 $mt={60.5}>Table Item</H2>
              <Box $rows="267px 1fr" $h={534.5} $mt={14}>
                <ItemPanel>
                  <ItemSets />
                </ItemPanel>
                <ItemPanel $dark>
                  <ItemSets dark />
                </ItemPanel>
              </Box>

              <H3 $mt={22.5}>Color</H3>
              <SpecHead $cols={COLOR_COLS} $h={29.5} $mt={10}>
                <span>Status</span>
                <span>Background Color</span>
                <span>Function Icon (24px) Color</span>
                <span>Caret Icon (12px) Color</span>
              </SpecHead>
              {COLOR_ROWS.map((r) => (
                <SpecRow key={r.cells[0]} $cols={COLOR_COLS} $h={r.h}>
                  <SpecName $bold>{r.cells[0]}</SpecName>
                  <span>{r.cells[1]}</span>
                  <span>{r.cells[2]}</span>
                  <span>{r.cells[3]}</span>
                </SpecRow>
              ))}

              <H3 $mt={22.5}>Radius</H3>
              <SpecHead $cols={PAIR_COLS} $mt={8.5}>
                <span>Spec</span>
                <span>Corner Rounded–L (Default)</span>
              </SpecHead>
              <SpecRow $cols={PAIR_COLS} $h={54.6}>
                <SpecName $bold>Radius</SpecName>
                <span>radius-xxs</span>
              </SpecRow>

              <H2 $mt={60}>Transition</H2>
              <Para>狀態變化時需有變色過渡動態</Para>
              <SpecHead $cols={PAIR_COLS} $mt={11.7}>
                <span>Duration</span>
                <span>Easing</span>
              </SpecHead>
              <SpecRow $cols={PAIR_COLS} $h={54}>
                <SpecName>duration-short</SpecName>
                <span>easing-standard</span>
              </SpecRow>
            </FrameBody>
          </Frame>
        </Column>

        <Column>
          <FrameTitle>Tool Bar/Tool Bar/Usage</FrameTitle>
          <Frame>
            <FrameHead>
              <Crumb>Table/Table Bar</Crumb>
              <PageName>Table Bar</PageName>
              <PageNote>針對表格的功能面板。</PageNote>
            </FrameHead>
            <FrameBody>
              <H2 $mt={29}>Anatomy</H2>
              <LegendRow />
              <Box $h={187.5} $mt={11}>
                <Pane $first $pt={73}>
                  <TableBar>
                    <PinBadge $x={-30} $y={10} $color={BLUE}>1</PinBadge>
                    <Lead $x={-21} $y={10} $w={24} $color={BLUE} />
                    <PinBadge $x={96} $y={-24} $color={GREY}>2</PinBadge>
                    <Lead $x={96} $y={-15} $h={13} $color={GREY} />
                  </TableBar>
                  <Caption $mt={12.5}>Table Bar_Column</Caption>
                </Pane>
              </Box>
              <NoteList
                items={[
                  { title: "Table Item", req: true, text: "功能項目，右側的 Carent Icon 僅在該項目有下拉選單時應用。" },
                  { title: "Divider", text: "可隱藏。\n主要用來區分群組功能" },
                ]}
              />
              <H2 $mt={60.5}>Tooltip</H2>
              <Para>{"Hover 功能項目，上方會出現 Tooltip，顯示功能名稱。\n對應功能名稱可以看下方的 Specifications"}</Para>
              <Box $h={234.6} $mt={23}>
                <Pane $first $justify="center">
                  <TableBar on="panel">
                    <NameTip>切為標題欄</NameTip>
                    <Cursor $x={35} $y={21}>
                      <Pointer size={10} strokeWidth={1.4} />
                    </Cursor>
                  </TableBar>
                </Pane>
              </Box>

              <H2>Menu</H2>
              <Para>{"主要應用在有下拉功能的選擇器，以下列出預設樣式及類別。\n若選取對應樣式，則 Tool Bar 上顯示的 Icon 也需跟著變換。"}</Para>
              <Box $cols="1fr 1fr" $h={233.5} $mt={23.7} $radius="6px 6px 0 0">
                <MenuRowPanes />
              </Box>
              <Box $cols="1fr 1fr" $h={235.5} $mt={0} $tone="dark" $radius="0 0 6px 6px">
                <MenuRowPanes dark />
              </Box>

              <H2 $mt={60.5}>Position_Table</H2>
              <Para>點擊 Table 左上角 Drag Icon 時全選表格時出現，位置置中。</Para>
              <Box $h={420} $mt={11.7}>
                <Pane $first $pt={46.5}>
                  <Editor>
                    <EditorBar>
                      <EditorTool $caret><Pilcrow size={13} strokeWidth={1.1} /><ToolCaret><CaretGlyph /></ToolCaret></EditorTool>
                      <EditorTool><Quote size={12} strokeWidth={1.2} /></EditorTool>
                      <EditorTool><List size={13} strokeWidth={1.1} /></EditorTool>
                      <EditorTool><ListOrdered size={13} strokeWidth={1.1} /></EditorTool>
                      <EditorTool><ListChecks size={13} strokeWidth={1.1} /></EditorTool>
                      <EditorGap />
                      <EditorTool $caret><AlignGlyph /><ToolCaret><CaretGlyph /></ToolCaret></EditorTool>
                      <EditorGap />
                      <EditorTool><Minus size={14} strokeWidth={1.2} /></EditorTool>
                      <EditorTool><Image size={13} strokeWidth={1.1} /></EditorTool>
                      <EditorTool><GalleryHorizontal size={13} strokeWidth={1.1} /></EditorTool>
                      <EditorTool><IdCard size={13} strokeWidth={1.1} /></EditorTool>
                      <EditorTool><Rows3 size={13} strokeWidth={1.1} /></EditorTool>
                      <EditorGap />
                      <EditorTool $caret><Code size={13} strokeWidth={1.1} /><ToolCaret><CaretGlyph /></ToolCaret></EditorTool>
                    </EditorBar>
                    <EditorBody>
                      <EditorTitle>{"這個章節標題用來區分不同的主要章節，幫助讀者快速找到資\n訊。(24)"}</EditorTitle>
                      <EditorText>{"此外，選擇合適的字體大小與行距，也能影響閱讀體驗。例如，過小的字體可能讓讀者感到吃\n力，而過密的行距可能導致視覺疲勞。"}</EditorText>
                      <TableShell
                        w={385}
                        ml={-14}
                        title={TITLE_FULL}
                        bold
                        over={
                          <>
                            <MiniBar>
                              <Tool><Copy size={10} strokeWidth={1.1} /></Tool>
                              <Tool $caret><AlignGlyph /><ToolCaret><CaretGlyph /></ToolCaret></Tool>
                              <Tool $danger><Trash2 size={11} strokeWidth={1.2} /></Tool>
                            </MiniBar>
                            <SpaceTag>spacing-4</SpaceTag>
                          </>
                        }
                      >
                        <BlankTable cols="128px 128.5px 1fr" row={24.3} fill="#fff" focus />
                      </TableShell>
                    </EditorBody>
                  </Editor>
                </Pane>
              </Box>
            </FrameBody>
          </Frame>
        </Column>

        <ScrollThumb $x={342} $y={2050} $w={216} $h={8} />
        <ScrollThumb $x={3348} $y={101} $w={8} $h={258} />
      </Board>
    </>
  );
}
